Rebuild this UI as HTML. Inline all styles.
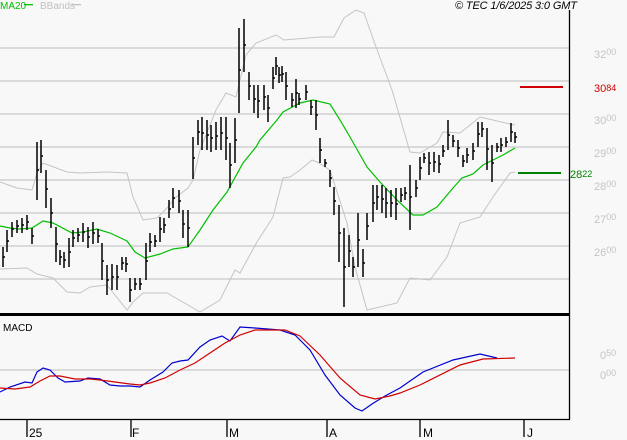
<!DOCTYPE html>
<html><head><meta charset="utf-8"><style>
html,body{margin:0;padding:0;background:#f8f8f8;}
body{width:627px;height:440px;overflow:hidden;position:relative;font-family:"Liberation Sans",sans-serif;}
svg{position:absolute;left:0;top:0;}
</style></head><body>
<svg width="627" height="440" viewBox="0 0 627 440" xmlns="http://www.w3.org/2000/svg">
<rect width="627" height="440" fill="#f8f8f8"/>
<g stroke="#c8c8c8" stroke-width="1.2">
<path d="M0 48H569M0 81H569M0 114H569M0 147H569M0 180H569M0 213H569M0 246H569M0 279H569M0 370H569"/>
</g>
<g fill="none" stroke="#c4c4c4" stroke-width="1">
<polyline points="0,182 17,188 32,190 37,173 43,163 67,172 80,173 107,172 127,173 133,197 143,220 157,218 167,208 175,198 188,188 193,180 200,150 216,110 226,93 236,97 246,55 256,43 276,35 284,40 320,37 334,37 344,18 356,10 364,13 376,47 392,90 410,152 420,153 437,143 443,132 460,133 480,117 510,124 515,125"/>
<polyline points="0,269 27,268 37,274 53,278 67,292 80,293 90,287 107,285 127,310 133,302 143,293 167,293 188,305 200,312 220,300 235,270 240,273 257,242 273,217 283,178 290,177 300,170 312,160 317,162 330,170 347,223 355,267 367,310 397,303 410,278 430,280 447,257 460,223 480,217 493,197 510,173 515,172"/>
</g>
<polyline fill="none" stroke="#00c000" stroke-width="1.2" points="0,226 10,228 20,229 32,228 43,221 53,223 72,233 83,232 97,229 110,233 127,241 135,252 145,258 160,254 173,249 188,247 200,230 213,210 227,192 243,163 256,147 260,140 277,120 283,112 300,103 313,100 330,104 340,120 350,137 367,167 380,182 397,200 413,215 423,215 437,207 453,188 462,178 473,174 483,165 493,160 503,155 515,148"/>
<path fill="none" stroke="#000" stroke-width="1.5" d="M3 247V267M3 257h2M7 230V252M7 241h2M12 222V237M12 229h2M17 220V233M17 226h2M22 218V233M22 225h2M27 215V230M27 222h2M32 228V244M32 236h2M37 142V200M37 170h2M41 140V173M41 156h2M46 170V208M46 189h2M51 198V228M51 213h2M56 227V262M56 244h2M60 250V265M60 257h2M64 252V268M64 260h2M69 238V267M69 252h2M73 230V247M73 238h2M78 228V242M78 235h2M83 223V242M83 232h2M88 227V248M88 237h2M93 222V244M93 233h2M98 229V243M98 236h2M102 243V280M102 261h2M107 265V295M107 280h2M112 264V290M112 277h2M117 265V290M117 277h2M122 257V270M122 263h2M126 257V272M126 264h2M130 278V302M130 290h2M135 278V290M135 284h2M140 278V290M140 284h2M146 243V280M146 261h2M150 233V252M150 242h2M155 235V247M155 241h2M160 217V242M160 229h2M164 218V233M164 225h2M169 200V218M169 209h2M173 188V208M173 198h2M179 190V213M179 201h2M183 210V238M183 224h2M188 210V247M188 228h2M193 137V179M193 158h2M198 120V145M198 132h2M202 117V150M202 133h2M207 120V150M207 135h2M211 125V152M211 138h2M216 122V150M216 136h2M221 117V150M221 133h2M226 117V160M226 138h2M230 143V188M230 165h2M235 118V163M235 140h2M239 28V113M239 70h2M244 19V72M244 45h2M249 72V100M249 86h2M254 85V113M254 99h2M258 85V118M258 101h2M264 85V110M264 97h2M268 95V122M268 108h2M273 67V89M273 78h2M276 57V75M276 66h2M279 67V83M279 75h2M282 66V82M282 74h2M286 72V100M286 86h2M292 93V107M292 100h2M296 79V108M296 93h2M299 93V105M299 99h2M306 85V100M306 92h2M311 100V115M311 107h2M316 100V130M316 115h2M320 138V163M320 150h2M325 159V167M325 163h2M330 170V187M330 178h2M334 187V215M334 201h2M339 205V262M339 233h2M344 228V307M344 267h2M349 235V267M349 251h2M353 257V277M353 267h2M358 213V267M358 240h2M363 249V277M363 263h2M367 213V240M367 226h2M373 185V222M373 203h2M377 185V210M377 197h2M382 185V213M382 199h2M386 188V218M386 203h2M391 190V217M391 203h2M396 188V220M396 204h2M401 188V202M401 195h2M405 187V200M405 193h2M410 165V230M410 197h2M416 180V197M416 188h2M420 157V180M420 168h2M424 153V163M424 158h2M429 152V175M429 163h2M434 152V172M434 162h2M439 155V173M439 164h2M443 145V157M443 151h2M448 120V150M448 135h2M453 135V147M453 141h2M458 140V157M458 148h2M463 155V167M463 161h2M467 148V163M467 155h2M473 143V160M473 151h2M478 122V147M478 134h2M482 122V137M482 129h2M487 128V170M487 149h2M492 145V182M492 163h2M497 143V152M497 147h2M501 138V152M501 145h2M506 137V147M506 142h2M511 123V142M511 132h2M515 132V143M515 137h2"/>
<rect x="520" y="86" width="43" height="2" fill="#d00000"/>
<rect x="518" y="172" width="43" height="2" fill="#008000"/>
<polyline fill="none" stroke="#0000d0" stroke-width="1.2" points="0,392 10,387 25,382 32,383 37,372 43,368 50,370 58,378 65,382 80,381 88,378 100,379 110,385 120,386 130,386 140,387 150,380 163,372 172,363 180,361 188,360 200,347 210,340 222,336 230,341 240,327 255,328 280,330 295,335 310,350 325,375 340,395 355,408 362,411 372,404 385,396 400,388 423,372 453,360 480,354 497,358"/>
<polyline fill="none" stroke="#d00000" stroke-width="1.2" points="0,388 15,389 30,387 40,381 50,376 60,376 75,379 90,379 100,380 115,382 130,384 140,385 150,383 165,378 180,370 195,363 210,353 225,343 240,335 255,330 285,330 300,336 320,355 340,378 360,395 375,399 390,396 400,393 420,385 460,365 483,359 515,358"/>
<rect x="0" y="313" width="569" height="3" fill="#000"/>
<path stroke="#000" stroke-width="1.3" fill="none" d="M569.5 10V419.5H0M27 419V437M131 419V437M227 419V437M327 419V437M420 419V437M524 419V437"/>
<g font-size="12" fill="#000">
<text x="29" y="437">25</text><text x="132" y="437">F</text><text x="229" y="437">M</text><text x="329" y="437">A</text><text x="423" y="437">M</text><text x="527" y="437">J</text>
</g>
<text x="3" y="331" font-size="10" fill="#000">MACD</text>
<text x="0" y="9" font-size="10" fill="#00c000">MA20</text>
<rect x="24" y="4" width="9" height="1.3" fill="#00c000"/>
<text x="40" y="9" font-size="10" fill="#c0c0c0">BBands</text>
<rect x="72" y="4" width="9" height="1.3" fill="#c0c0c0"/>
<text x="455" y="9" font-size="11" font-style="italic" fill="#000" textLength="122">© TEC 1/6/2025 3:0 GMT</text>
<g font-size="11" fill="#c4c4c4">
<text x="594" y="58">32<tspan font-size="9" dy="-3">00</tspan></text>
<text x="594" y="124">30<tspan font-size="9" dy="-3">00</tspan></text>
<text x="594" y="157">29<tspan font-size="9" dy="-3">00</tspan></text>
<text x="594" y="190">28<tspan font-size="9" dy="-3">00</tspan></text>
<text x="594" y="223">27<tspan font-size="9" dy="-3">00</tspan></text>
<text x="594" y="256">26<tspan font-size="9" dy="-3">00</tspan></text>
<text x="600" y="359">0<tspan font-size="9" dy="-3">50</tspan></text>
<text x="600" y="379">0<tspan font-size="9" dy="-3">00</tspan></text>
</g>
<text x="594" y="92" font-size="11" fill="#d00000">30<tspan font-size="9" dy="-1">84</tspan></text>
<text x="570" y="178" font-size="11" fill="#008000">28<tspan font-size="9" dy="-1">22</tspan></text>
</svg>
</body></html>
